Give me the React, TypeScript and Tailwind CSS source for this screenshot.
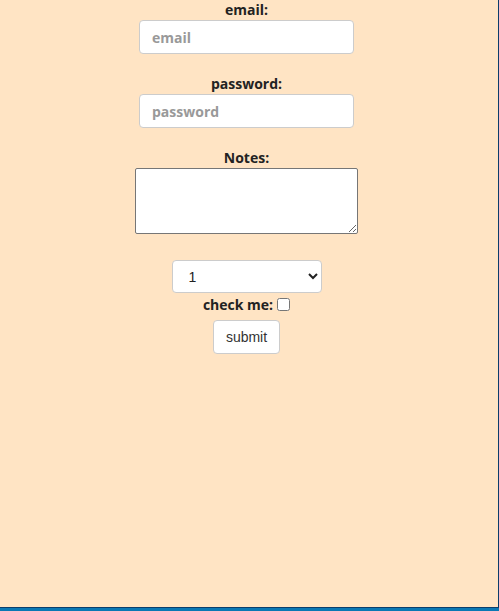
import React from "react";

export default function App() {
  return (
    <div className="w-[499px] h-[611px] bg-[#ffe4c4] flex flex-col overflow-hidden">
      <div className="flex flex-1 min-h-0">
        <div className="flex-1 flex flex-col" style={{ fontFamily: '"Open Sans", "Noto Sans", sans-serif' }}>
          <form className="w-[493px] flex flex-col items-center text-[#222]">
            <label className="h-[20px] leading-[20px] text-[14px] font-bold">email:</label>
            <input
              placeholder="email"
              className="w-[215px] h-[34px] bg-white border border-[#cccccc] rounded-[4px] px-[12px] text-[14px] font-bold placeholder:text-[#999999] outline-none"
            />
            <label className="mt-[20px] h-[20px] leading-[20px] text-[14px] font-bold">password:</label>
            <input
              placeholder="password"
              type="password"
              className="w-[215px] h-[34px] bg-white border border-[#cccccc] rounded-[4px] px-[12px] text-[14px] font-bold placeholder:text-[#999999] outline-none"
            />
            <label className="mt-[20px] h-[20px] leading-[20px] text-[14px] font-bold">Notes:</label>
            <textarea className="w-[223px] h-[66px] bg-white border border-[#767676] rounded-[2px] block" />
            <select
              className="mt-[26px] w-[150px] h-[33px] bg-white border border-[#cccccc] rounded-[4px] pl-[12px] pr-[6px] text-[14px] text-[#222]"
              style={{ fontFamily: '"Liberation Sans", Arial, sans-serif' }}
              defaultValue="1"
            >
              <option value="1">1</option>
              <option value="2">2</option>
            </select>
            <div className="h-[22px] flex items-center gap-[4px] text-[14px] font-bold">
              <span>check me:</span>
              <input type="checkbox" className="w-[13px] h-[13px]" />
            </div>
            <button
              type="button"
              className="mt-[5px] w-[67px] h-[34px] bg-white border border-[#cccccc] rounded-[4px] text-[14px] text-[#333]"
              style={{ fontFamily: '"Liberation Sans", Arial, sans-serif' }}
            >
              submit
            </button>
          </form>
        </div>
        <div className="w-[1px] bg-[#0c3d6b]" />
      </div>
      <div className="h-[1px] bg-[#0c3d6b]" />
      <div className="h-[3px] bg-[#0a78b4]" />
    </div>
  );
}
